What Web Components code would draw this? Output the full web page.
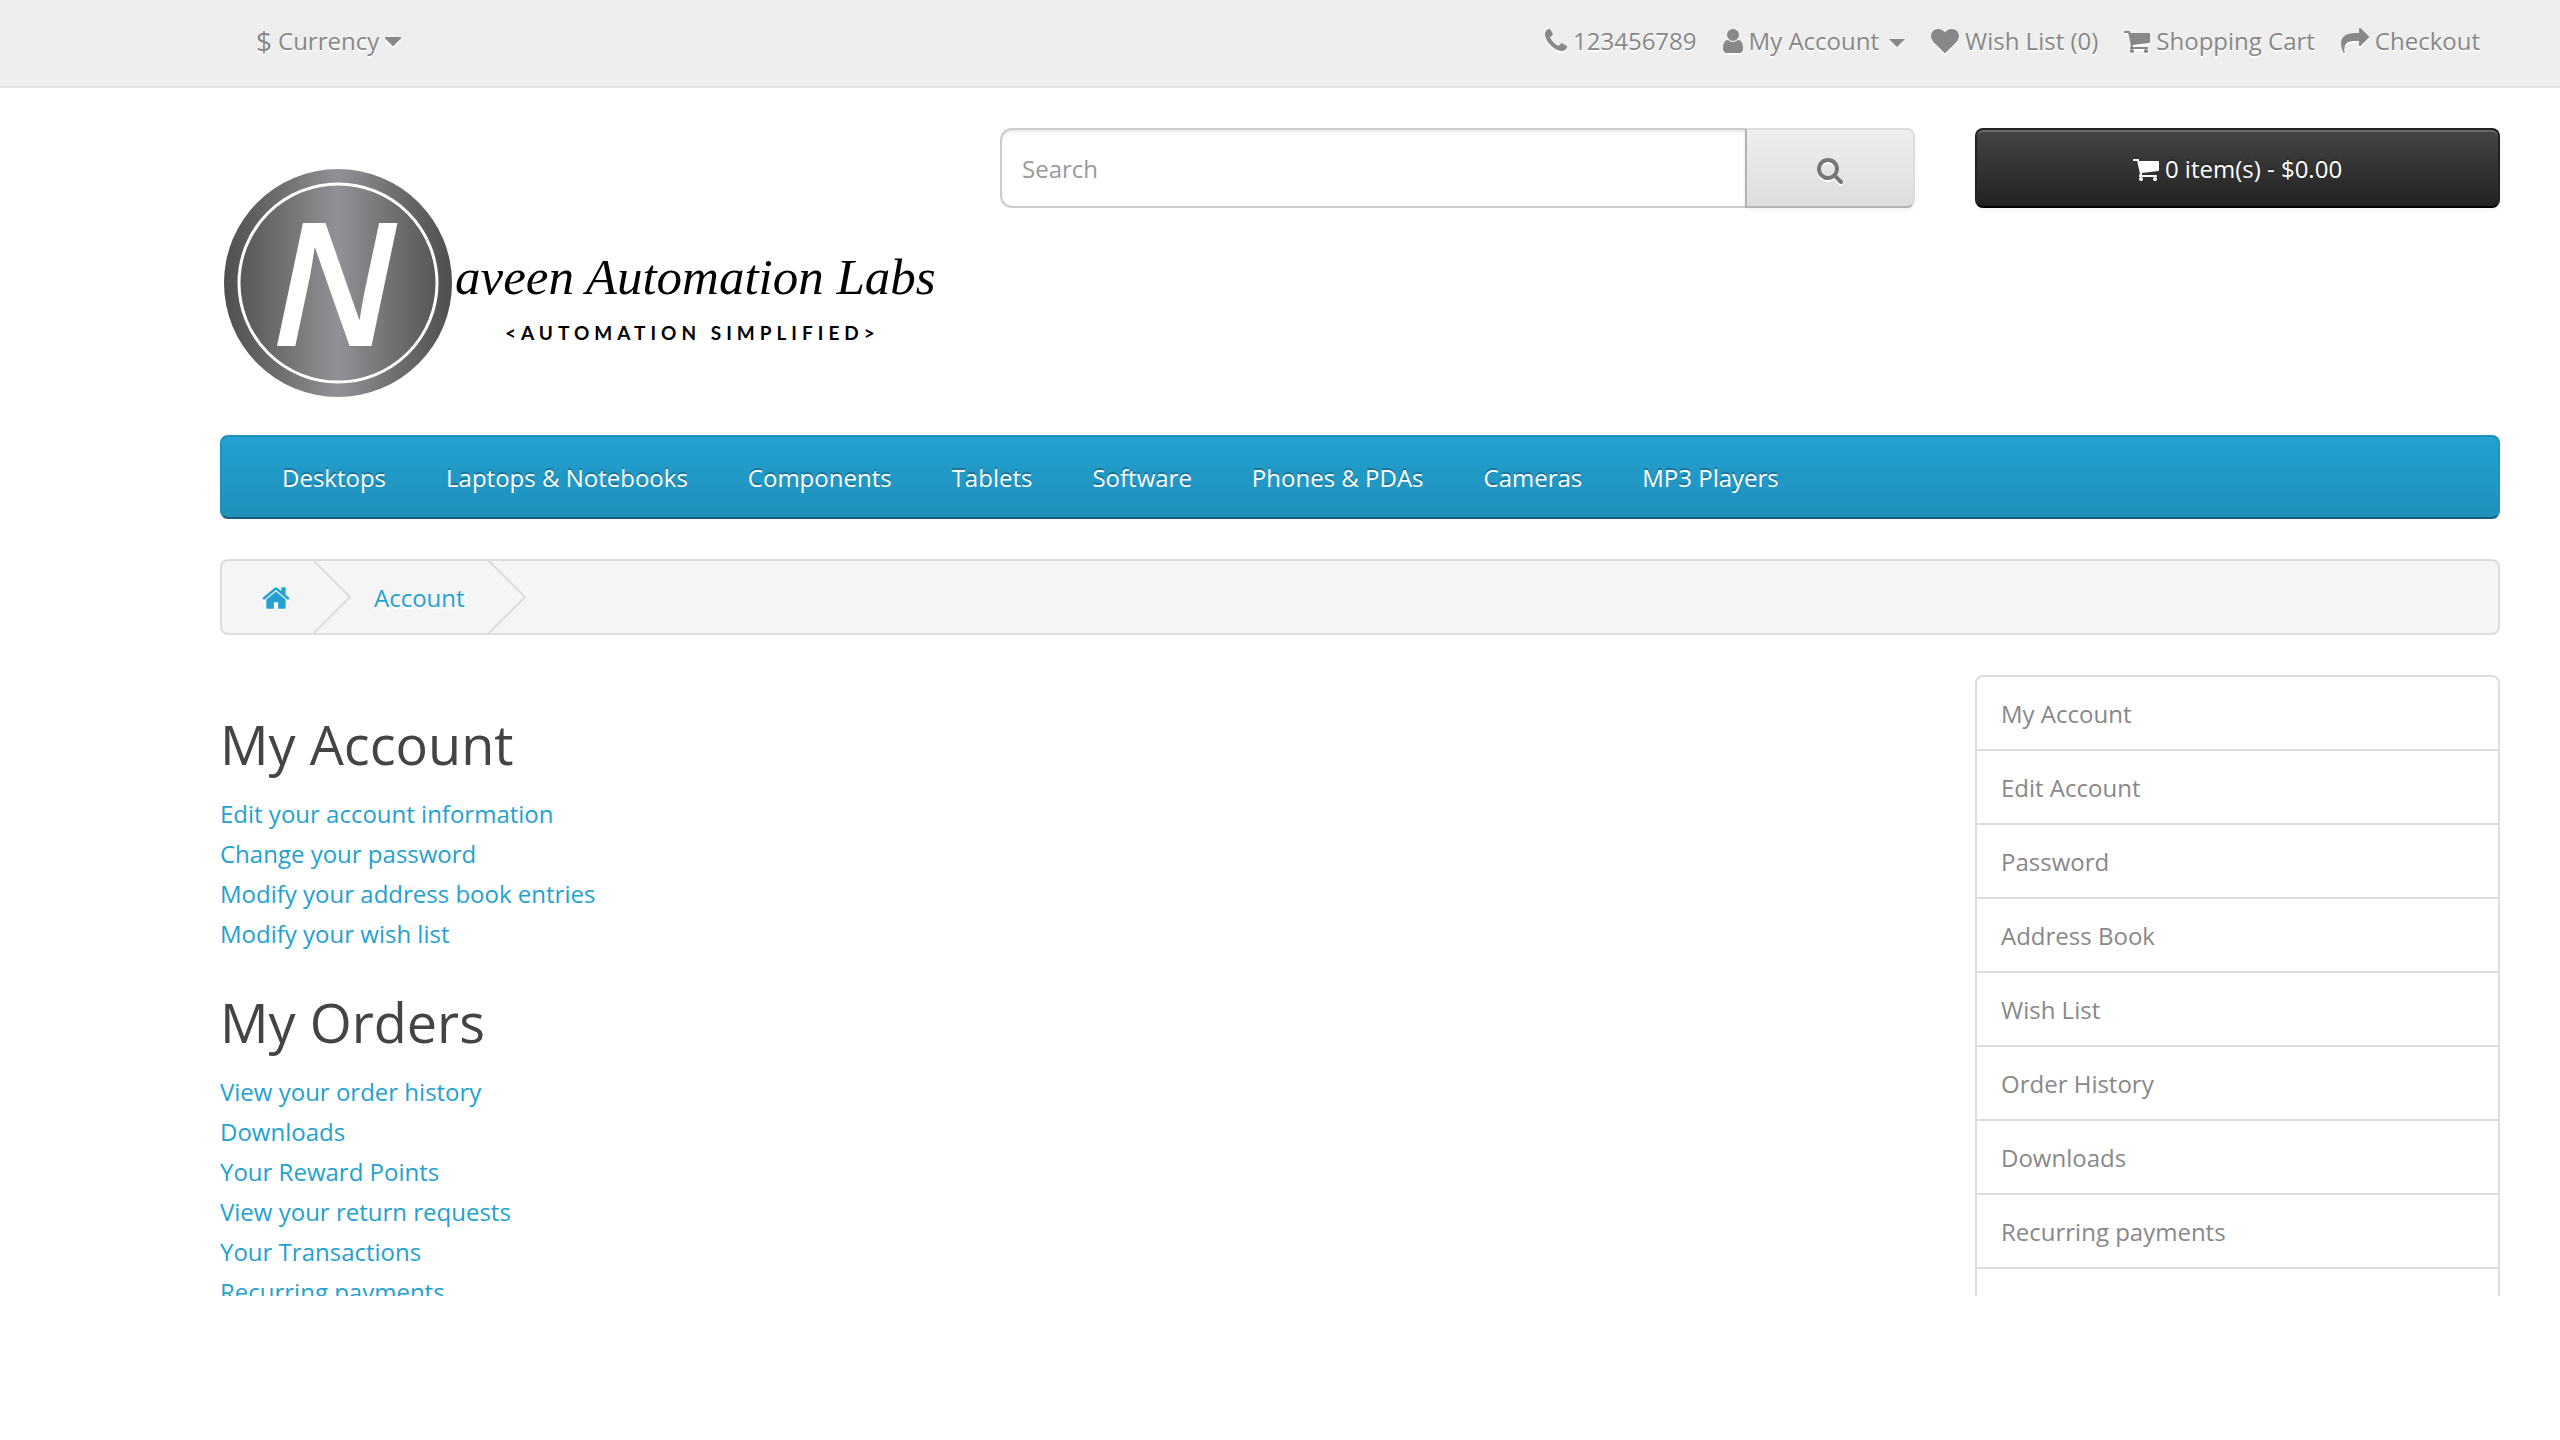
<!DOCTYPE html>
<html lang="en">
<head>
<meta charset="utf-8">
<title>My Account</title>
<style>
  html, body { margin: 0; background: #fff; }
  body {
    font: 400 24px/40px "Open Sans", sans-serif;
    color: #666;
    --link: #23a1d1;
    --muted: #888;
    --line: #ddd;
    --gutter: 60px;
  }
</style>
</head>
<body>
<store-page>
  <store-topbar slot="top"></store-topbar>
  <store-logo slot="logo"></store-logo>
  <store-search slot="search"></store-search>
  <store-cart slot="cart">0 item(s) - $0.00</store-cart>
  <store-nav slot="nav">
    <nav-link>Desktops</nav-link>
    <nav-link>Laptops &amp; Notebooks</nav-link>
    <nav-link>Components</nav-link>
    <nav-link>Tablets</nav-link>
    <nav-link>Software</nav-link>
    <nav-link>Phones &amp; PDAs</nav-link>
    <nav-link>Cameras</nav-link>
    <nav-link>MP3 Players</nav-link>
  </store-nav>
  <store-breadcrumb slot="crumbs"></store-breadcrumb>
  <account-section slot="main" heading="My Account" links="Edit your account information|Change your password|Modify your address book entries|Modify your wish list"></account-section>
  <account-section slot="main" heading="My Orders" links="View your order history|Downloads|Your Reward Points|View your return requests|Your Transactions|Recurring payments"></account-section>
  <account-menu slot="side" links="My Account|Edit Account|Password|Address Book|Wish List|Order History|Downloads|Recurring payments"></account-menu>
</store-page>

<script>
const ICONS = {
  phone: ['192 0 1408 1792', 'M1600 1240q0 27-10 70.5t-21 68.5q-21 50-122 106-94 51-186 51-27 0-53-3.500t-57.500-12.500-47-14.500-55.500-20.500-49-18q-98-35-175-83-127-79-264-216t-216-264q-48-77-83-175-3-9-18-49t-20.500-55.500-14.500-47-12.500-57.500-3.500-53q0-92 51-186 56-101 106-122 25-11 68.500-21t70.500-10q14 0 21 3 18 6 53 76 11 19 30 54t35 63.500 31 53.500q3 4 17.500 25t21.500 35.500 7 28.500q0 20-28.500 50t-62 55-62 53-28.500 46q0 9 5 22.500t8.500 20.500 14 24 11.500 19q76 137 174 235t235 174q2 1 19 11.500t24 14 20.500 8.500 22.500 5q18 0 46-28.500t53-62 55-62 50-28.500q14 0 28.500 7t35.500 21.500 25 17.500q25 15 53.500 31t63.500 35 54 30q70 35 76 53 3 7 3 21z'],
  user: ['256 0 1280 1792', 'M1536 1399q0 109-62.500 187t-150.500 78h-854q-88 0-150.500-78t-62.500-187q0-85 8.500-160.500t31.500-152 58.500-131 94-89 134.500-34.500q131 128 313 128t313-128q76 0 134.500 34.500t94 89 58.500 131 31.500 152 8.500 160.500zm-256-887q0 159-112.500 271.500t-271.500 112.500-271.500-112.500-112.500-271.500 112.500-271.500 271.500-112.500 271.500 112.500 112.500 271.500z'],
  heart: ['0 0 1792 1792', 'M896 1664q-26 0-44-18l-624-602q-10-8-27.500-26t-55.500-65.500-68-97.500-53.500-121-23.500-138q0-220 127-344t351-124q62 0 126.500 21.500t120 58 95.500 68.500 76 68q36-36 76-68t95.500-68.500 120-58 126.500-21.500q224 0 351 124t127 344q0 221-229 450l-623 600q-18 18-44 18z'],
  cart: ['64 0 1664 1792', 'M704 1536q0 52-38 90t-90 38-90-38-38-90 38-90 90-38 90 38 38 90zm896 0q0 52-38 90t-90 38-90-38-38-90 38-90 90-38 90 38 38 90zm128-1088v512q0 24-16.500 42.500t-40.500 21.500l-1044 122q13 60 13 70 0 16-24 64h920q26 0 45 19t19 45-19 45-45 19h-1024q-26 0-45-19t-19-45q0-11 8-31.500t16-36 21.500-40 15.500-29.500l-177-823h-204q-26 0-45-19t-19-45 19-45 45-19h256q16 0 28.500 6.500t19.500 15.500 13 24.500 8 26 5.500 29.500 4.500 26h1201q26 0 45 19t19 45z'],
  share: ['0 0 1792 1792', 'M1792 640q0 26-19 45l-512 512q-19 19-45 19t-45-19-19-45v-256h-224q-98 0-175.500 6t-154 21.500-133 42.500-105.500 69.500-80 101-48.500 138.500-17.500 181q0 55 5 123 0 6 2.500 23.500t2.500 26.500q0 15-8.500 25t-23.500 10q-16 0-28-17-7-9-13-22t-13.500-30-10.500-24q-127-285-127-451 0-199 53-333 162-403 875-403h224v-256q0-26 19-45t45-19 45 19l512 512q19 19 19 45z'],
  search: ['64 0 1664 1792', 'M1216 832q0-185-131.500-316.500t-316.500-131.500-316.500 131.500-131.500 316.500 131.500 316.500 316.500 131.500 316.500-131.500 131.500-316.500zm512 832q0 52-38 90t-90 38q-54 0-90-38l-343-342q-179 124-399 124-143 0-273.500-55.500t-225-150-150-225-55.500-273.500 55.500-273.500 150-225 225-150 273.500-55.500 273.500 55.500 225 150 150 225 55.500 273.500q0 220-124 399l343 343q37 37 37 90z'],
  home: ['64 0 1664 1792', 'M1472 992v480q0 26-19 45t-45 19h-384v-384h-256v384h-384q-26 0-45-19t-19-45v-480q0-1 .5-3t.5-3l575-474 575 474q1 2 1 6zm223-69l-62 74q-8 9-21 11h-3q-13 0-21-7l-692-577-692 577q-12 8-24 7-13-2-21-11l-62-74q-8-10-7-23.500t11-21.500l719-599q32-26 76-26t76 26l244 204v-195q0-14 9-23t23-9h192q14 0 23 9t9 23v408l219 182q10 8 11 21.500t-7 23.500z'],
  caret: ['384 0 1024 1792', 'M1408 704q0 26-19 45l-448 448q-19 19-45 19t-45-19l-448-448q-19-19-19-45t19-45 45-19h896q26 0 45 19t19 45z']
};

const define = (name, render) => customElements.define(name, class extends HTMLElement {
  connectedCallback() {
    if (this.shadowRoot) return;
    this.attachShadow({ mode: 'open' }).innerHTML = render(this);
  }
});

define('store-icon', el => {
  const [box, d] = ICONS[el.getAttribute('name')];
  const size = Number(el.getAttribute('size') || 28);
  const width = Math.round(box.split(' ')[2] / 1792 * size);
  return `<style>:host{display:block;flex:none}svg{display:block;fill:currentColor;overflow:visible;filter:var(--icon-shadow,none)}</style>
  <svg viewBox="${box}" width="${width}" height="${size}" aria-hidden="true"><path d="${d}"/></svg>`;
});

define('store-page', () => `<style>
  :host{display:block;height:90vh;overflow:hidden}
  .wrap{padding:40px var(--gutter) 0 220px}
  .row{display:grid;grid-template-columns:repeat(12,minmax(0,1fr));column-gap:var(--gutter);align-items:start}
  .c3{grid-column:span 3}.c4{grid-column:span 4}.c5{grid-column:span 5}.c9{grid-column:span 9}
  .stack{display:flex;flex-direction:column;gap:40px}
  .main{padding-top:40px;display:flex;flex-direction:column;gap:39px}
</style>
<slot name="top"></slot>
<div class="wrap stack">
  <header class="row"><div class="c4"><slot name="logo"></slot></div><div class="c5"><slot name="search"></slot></div><div class="c3"><slot name="cart"></slot></div></header>
  <slot name="nav"></slot>
  <slot name="crumbs"></slot>
  <div class="row"><main class="c9 main"><slot name="main"></slot></main><aside class="c3"><slot name="side"></slot></aside></div>
</div>`);

define('store-topbar', () => `<style>
  :host{display:flex;justify-content:space-between;align-items:center;box-sizing:border-box;height:88px;padding:0 80px 4px 256px;background:#eee;border-bottom:2px solid #e2e2e2;color:var(--muted);text-shadow:0 2px 0 #fff;--icon-shadow:drop-shadow(0 2px 0 #fff)}
  button{all:unset;display:flex;align-items:center;gap:6px;cursor:pointer}
  .sign{font-size:28px}
  nav{display:flex;gap:26px}
  a{display:flex;align-items:center;gap:6px;color:inherit;text-decoration:none}
  .caret{margin:4px 0 0 4px;border:8px solid transparent;border-top-color:currentColor;border-bottom:0}
</style>
<button type="button"><span class="sign">$</span><span>Currency</span><store-icon name="caret"></store-icon></button>
<nav>
  <a href="#"><store-icon name="phone"></store-icon><span>123456789</span></a>
  <a href="#"><store-icon name="user"></store-icon><span>My Account</span><span class="caret"></span></a>
  <a href="#"><store-icon name="heart"></store-icon><span>Wish List (0)</span></a>
  <a href="#"><store-icon name="cart"></store-icon><span>Shopping Cart</span></a>
  <a href="#"><store-icon name="share"></store-icon><span>Checkout</span></a>
</nav>`);

define('store-logo', () => `<style>
  :host{display:block}
  svg{display:block;width:100%;height:auto;overflow:visible}
</style>
<svg viewBox="0 0 720 267" role="img" aria-label="Naveen Automation Labs">
  <defs><linearGradient id="metal">
    <stop offset="0" stop-color="#504f4e"/><stop offset=".25" stop-color="#6f6f6f"/><stop offset=".5" stop-color="#919297"/><stop offset=".75" stop-color="#6f6f6f"/><stop offset="1" stop-color="#504f4e"/>
  </linearGradient></defs>
  <circle cx="118" cy="155" r="114" fill="url(#metal)"/>
  <circle cx="118" cy="155" r="99" fill="none" stroke="#fff" stroke-width="3"/>
  <text x="114" y="218" text-anchor="middle" font-family="Open Sans, sans-serif" font-style="italic" font-weight="600" font-size="172" fill="#fff">N</text>
  <text x="235" y="166" font-family="Liberation Serif, serif" font-style="italic" font-weight="400" font-size="51" fill="#000">aveen Automation Labs</text>
  <text x="285" y="212" font-family="Lato, sans-serif" font-weight="700" font-size="19" letter-spacing="5" fill="#000">&lt;AUTOMATION SIMPLIFIED&gt;</text>
</svg>`);

define('store-search', () => `<style>
  :host{display:block}
  form{display:flex;height:80px}
  input{flex:1;min-width:0;box-sizing:border-box;padding:2px 20px 0;border:2px solid #ccc;border-right:0;border-radius:12px 0 0 12px;background:#fff;box-shadow:inset 0 2px 2px rgba(0,0,0,.075);font:inherit;color:#555;outline:0}
  input::placeholder{color:#999;opacity:1}
  button{box-sizing:border-box;width:170px;display:flex;align-items:center;justify-content:center;border:2px solid;border-color:#ddd #ddd #b3b3b3 #b3b3b3;border-radius:0 8px 8px 0;background:linear-gradient(#eee,#ddd);box-shadow:inset 0 2px 0 rgba(255,255,255,.2),0 2px 4px rgba(0,0,0,.05);color:#777;padding:4px 0 0;--icon-shadow:drop-shadow(0 2px 0 #fff)}
</style>
<form onsubmit="return false"><input type="text" placeholder="Search" aria-label="Search"><button type="button" aria-label="Submit search"><store-icon name="search"></store-icon></button></form>`);

define('store-cart', () => `<style>
  :host{display:block}
  button{box-sizing:border-box;width:100%;height:80px;padding:2px 0 0;display:flex;align-items:center;justify-content:center;gap:6px;border:2px solid;border-color:#222 #222 #000;border-radius:8px;background:linear-gradient(#444,#222);box-shadow:inset 0 2px 0 rgba(255,255,255,.2),0 2px 4px rgba(0,0,0,.05);font:inherit;color:#fff;text-shadow:0 -2px 0 rgba(0,0,0,.25)}
</style>
<button type="button"><store-icon name="cart"></store-icon><span><slot></slot></span></button>`);

define('store-nav', () => `<style>
  :host{display:block}
  nav{display:flex;padding:21px 30px 19px;border:2px solid;border-color:#1f90bb #1f90bb #145e7a;border-radius:8px;background:linear-gradient(#23a1d1,#1f90bb)}
</style><nav><slot></slot></nav>`);

define('nav-link', () => `<style>
  :host{display:block;padding:0 30px}
  a{color:#fff;text-decoration:none;text-shadow:0 -2px 0 rgba(0,0,0,.25)}
</style><a href="#"><slot></slot></a>`);

define('store-breadcrumb', () => {
  const chevron = '<svg width="38" height="72" viewBox="0 0 38 72" aria-hidden="true"><path d="M0 -1L37 36L0 73" fill="none" stroke="#ddd" stroke-width="2"/></svg>';
  return `<style>
  :host{display:block}
  nav{display:flex;align-items:center;gap:23px;height:72px;padding-left:40px;border:2px solid var(--line);border-radius:8px;background:#f5f5f5;text-shadow:0 2px 0 #fff;--icon-shadow:drop-shadow(0 2px 0 #fff)}
  svg{display:block}
  a{padding-top:2px;color:var(--link);text-decoration:none}
</style>
<nav aria-label="Breadcrumb"><a href="#" aria-label="Home"><store-icon name="home" size="30"></store-icon></a>${chevron}<a href="#">Account</a>${chevron}</nav>`;
});

const items = el => el.getAttribute('links').split('|').map(t => `<li><a href="#">${t}</a></li>`).join('');

define('account-section', el => `<style>
  :host{display:block}
  h2{margin:0 0 20px;font-size:54px;line-height:59px;font-weight:400;color:#444}
  ul{margin:0;padding:0;list-style:none}
  a{color:var(--link);text-decoration:none}
</style><h2>${el.getAttribute('heading')}</h2><ul>${items(el)}</ul>`);

define('account-menu', el => `<style>
  :host{display:block}
  ul{margin:0;padding:0;list-style:none;border:2px solid var(--line);border-radius:8px}
  li{min-height:40px;padding:17px 24px 15px}
  li+li{border-top:2px solid var(--line)}
  a{color:var(--muted);text-decoration:none}
</style><ul>${items(el)}<li></li></ul>`);
</script>
</body>
</html>
